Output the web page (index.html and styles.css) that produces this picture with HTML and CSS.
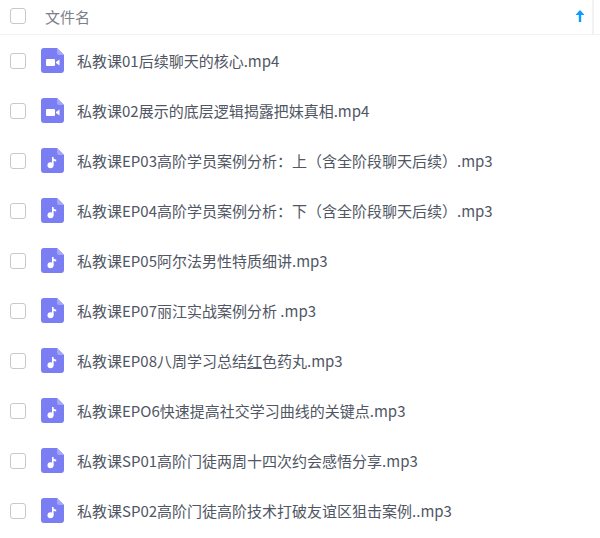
FILE: index.html
```html
<!DOCTYPE html>
<html lang="zh">
<head>
<meta charset="utf-8">
<title>文件名</title>
<link rel="stylesheet" href="styles.css">
</head>
<body>
<svg class="defs" width="0" height="0" aria-hidden="true">
  <symbol id="video" viewBox="0 0 23 25">
    <path d="M3 0H16L23 7V22a3 3 0 0 1-3 3H3a3 3 0 0 1-3-3V3a3 3 0 0 1 3-3Z" fill="#7b7df2"/>
    <path d="M16 0L23 7H18a2 2 0 0 1-2-2Z" fill="#a3a5f7"/>
    <rect x="5" y="11" width="9" height="7" rx="1" fill="#fff"/>
    <path d="M15 14L18.5 11.5V17.5L15 15Z" fill="#fff"/>
  </symbol>
  <symbol id="audio" viewBox="0 0 23 25">
    <path d="M3 0H16L23 7V22a3 3 0 0 1-3 3H3a3 3 0 0 1-3-3V3a3 3 0 0 1 3-3Z" fill="#7b7df2"/>
    <path d="M16 0L23 7H18a2 2 0 0 1-2-2Z" fill="#a3a5f7"/>
    <circle cx="9.5" cy="17.2" r="3" fill="#fff"/>
    <path d="M11 9H12.6V10.5C13.2 11.2 14.2 11.4 15.2 11.5V13.5C14.2 13.5 13.4 13.2 12.6 12.8V17.2H11Z" fill="#fff"/>
  </symbol>
</svg>
<main class="list">
  <header class="head">
    <span class="check"></span>
    <span class="head-name">文件名</span>
    <span class="head-end"><svg class="sort" width="10" height="12" viewBox="0 0 10 12"><path d="M5 0L9.5 5H6.2V12H3.8V5H.5Z" fill="#0d9bff"/></svg></span>
  </header>
  <div class="row"><span class="check"></span><svg class="icon"><use href="#video"/></svg><span class="name">私教课01后续聊天的核心.mp4</span></div>
  <div class="row"><span class="check"></span><svg class="icon"><use href="#video"/></svg><span class="name">私教课02展示的底层逻辑揭露把妹真相.mp4</span></div>
  <div class="row"><span class="check"></span><svg class="icon"><use href="#audio"/></svg><span class="name">私教课EP03高阶学员案例分析：上（含全阶段聊天后续）.mp3</span></div>
  <div class="row"><span class="check"></span><svg class="icon"><use href="#audio"/></svg><span class="name">私教课EP04高阶学员案例分析：下（含全阶段聊天后续）.mp3</span></div>
  <div class="row"><span class="check"></span><svg class="icon"><use href="#audio"/></svg><span class="name">私教课EP05阿尔法男性特质细讲.mp3</span></div>
  <div class="row"><span class="check"></span><svg class="icon"><use href="#audio"/></svg><span class="name">私教课EP07丽江实战案例分析 .mp3</span></div>
  <div class="row"><span class="check"></span><svg class="icon"><use href="#audio"/></svg><span class="name">私教课EP08八周学习总结<span class="mark">红</span>色药丸.mp3</span></div>
  <div class="row"><span class="check"></span><svg class="icon"><use href="#audio"/></svg><span class="name">私教课EPO6快速提高社交学习曲线的关键点.mp3</span></div>
  <div class="row"><span class="check"></span><svg class="icon"><use href="#audio"/></svg><span class="name">私教课SP01高阶门徒两周十四次约会感悟分享.mp3</span></div>
  <div class="row"><span class="check"></span><svg class="icon"><use href="#audio"/></svg><span class="name">私教课SP02高阶门徒高阶技术打破友谊区狙击案例..mp3</span></div>
</main>
</body>
</html>
```

FILE: styles.css
```css
html, body {
  margin: 0;
  padding: 0;
  background: #fff;
}
body {
  width: 600px;
  height: 538px;
  overflow: hidden;
  font-family: "Noto Sans CJK SC", "Noto Sans", sans-serif;
  font-size: 15px;
  color: #505663;
}
.defs {
  position: absolute;
}
.list {
  display: flex;
  flex-direction: column;
}
.head {
  display: flex;
  align-items: center;
  height: 35px;
  box-sizing: border-box;
  margin-bottom: 1px;
  padding-left: 10px;
  padding-right: 6px;
  padding-bottom: 2px;
  border-bottom: 1px solid #f2f2f4;
}
.head-name {
  margin-left: 19px;
  color: #7c8089;
}
.head-end {
  display: flex;
  align-items: center;
  flex: 1;
  justify-content: flex-end;
  align-self: stretch;
  margin-bottom: -2px;
  padding-bottom: 2px;
  padding-right: 7px;
  border-right: 2px solid #f2f2f2;
}
.sort {
  flex: none;
}
.check {
  flex: none;
  width: 16px;
  height: 16px;
  box-sizing: border-box;
  border: 1.5px solid #c9c9c9;
  border-radius: 3px;
}
.row {
  display: flex;
  align-items: center;
  height: 50px;
  padding-left: 10px;
}
.icon {
  flex: none;
  width: 23px;
  height: 25px;
  margin-left: 15px;
  margin-bottom: 1px;
}
.name {
  margin-left: 13px;
  margin-bottom: 2px;
  white-space: nowrap;
}
.mark {
  text-decoration: underline;
}
```
